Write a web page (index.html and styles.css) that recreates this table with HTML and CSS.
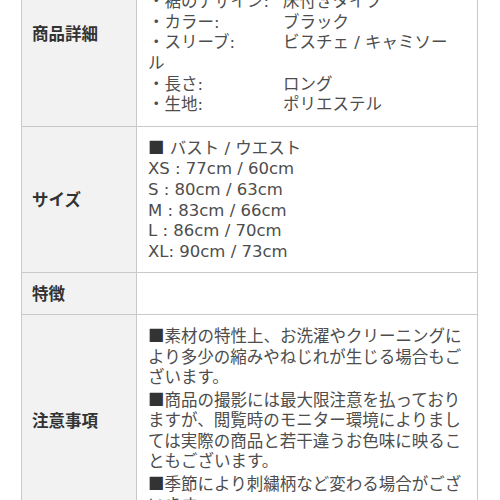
FILE: index.html
```html
<!DOCTYPE html>
<html lang="ja">
<head>
<meta charset="utf-8">
<link rel="stylesheet" href="styles.css">
</head>
<body>
<div class="page">
  <table class="spec">
    <tr>
      <th>商品詳細</th>
      <td>
        <div><span class="key">・シルエット:</span>Aライン</div>
        <div><span class="key">・ウエスト:</span>ハイウエスト</div>
        <div><span class="key">・裾のデザイン:</span>床付きタイプ</div>
        <div><span class="key">・カラー:</span>ブラック</div>
        <div><span class="key">・スリーブ:</span>ビスチェ / キャミソール</div>
        <div><span class="key">・長さ:</span>ロング</div>
        <div><span class="key">・生地:</span>ポリエステル</div>
      </td>
    </tr>
    <tr>
      <th>サイズ</th>
      <td class="size">
        <div><span class="sq">■</span> バスト / ウエスト</div>
        <div>XS : 77cm / 60cm</div>
        <div>S : 80cm / 63cm</div>
        <div>M : 83cm / 66cm</div>
        <div>L : 86cm / 70cm</div>
        <div>XL: 90cm / 73cm</div>
      </td>
    </tr>
    <tr>
      <th>特徴</th>
      <td></td>
    </tr>
    <tr>
      <th>注意事項</th>
      <td>
        <div><span class="sq">■</span>素材の特性上、お洗濯やクリーニングにより多少の縮みやねじれが生じる場合もございます。</div>
        <div><span class="sq">■</span>商品の撮影には最大限注意を払っておりますが、閲覧時のモニター環境によりましては実際の商品と若干違うお色味に映ることもございます。</div>
        <div><span class="sq">■</span>季節により刺繍柄など変わる場合がございます。</div>
      </td>
    </tr>
  </table>
</div>
</body>
</html>
```

FILE: styles.css
```css
html, body {
  margin: 0;
  padding: 0;
  background: #ffffff;
}

.page {
  padding: 0 22px 0 21px;
  margin-top: -60px;
}

.spec {
  width: 457px;
  border-collapse: collapse;
  font-family: "DejaVu Sans", "Noto Sans CJK JP", sans-serif;
  font-size: 16.5px;
  line-height: 20.6px;
  color: #4d4d4d;
}

.spec th,
.spec td {
  border: 1px solid #c9c9c9;
  padding: 10px 13px 10px 11px;
  vertical-align: middle;
  text-align: left;
}

.spec th {
  width: 93px;
  background: #f2f2f2;
  color: #333333;
  font-family: "Noto Sans CJK JP", sans-serif;
  font-weight: bold;
  padding-left: 10px;
  padding-right: 11px;
}

.spec td {
  background: #ffffff;
}

.key {
  display: inline-block;
  width: 135px;
}

.sq {
  font-family: "Noto Sans CJK JP", sans-serif;
  color: #333333;
}
```
